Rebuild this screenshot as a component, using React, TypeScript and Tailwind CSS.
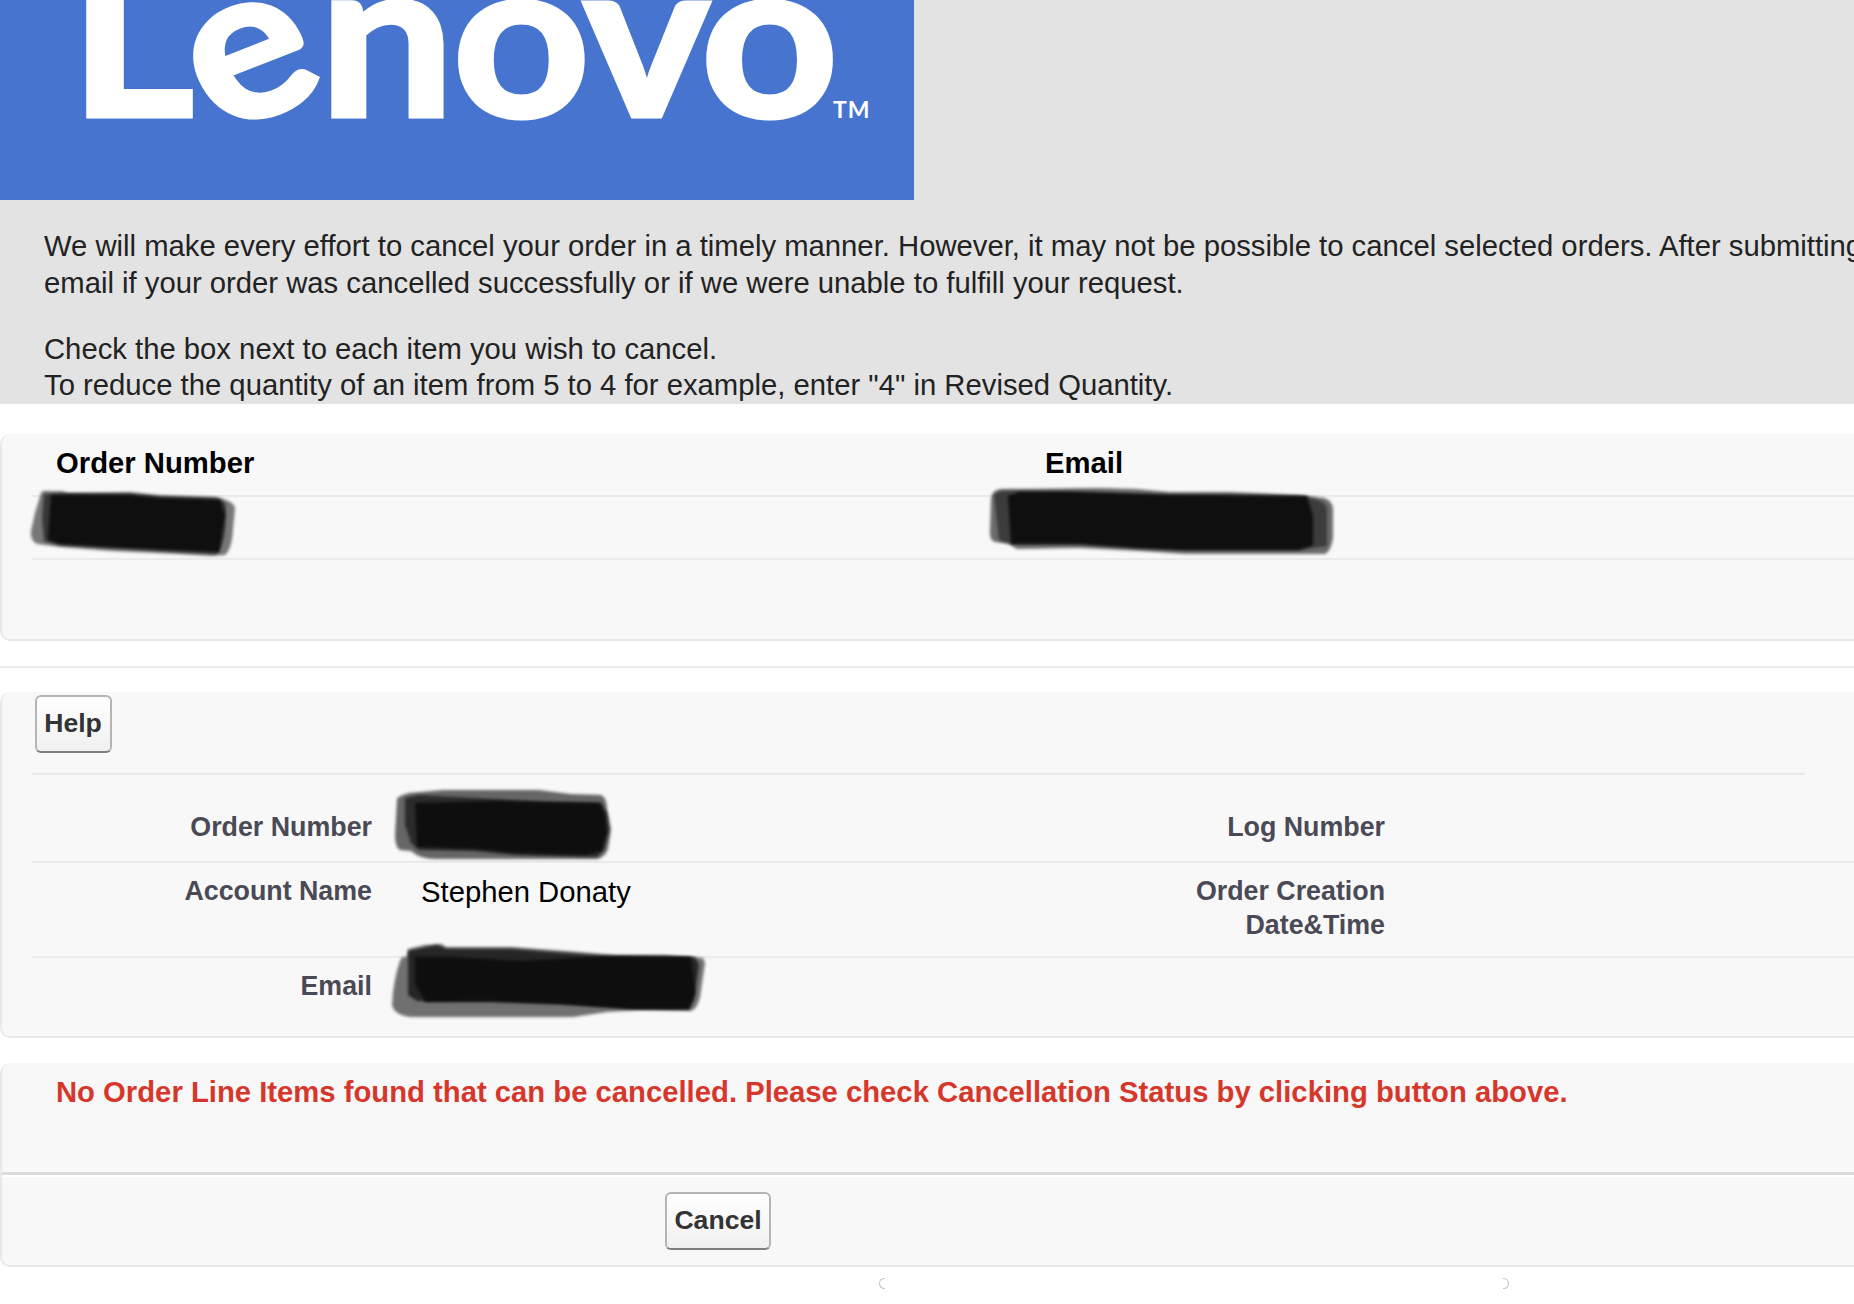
import React from 'react';

type Layer = { d: string; opacity: number };

// marker strokes that hide a private value
function Marker({ className, width, height, layers }: { className: string; width: number; height: number; layers: Layer[] }) {
  return (
    <svg className={className} width={width} height={height} viewBox={`0 0 ${width} ${height}`} overflow="visible" aria-hidden="true">
      {layers.map((l, i) => (
        <path key={i} d={l.d} fill="#0d0d0d" fillOpacity={l.opacity} className="blur-[1.6px]" />
      ))}
    </svg>
  );
}

const orderMarker: Layer[] = [
  { d: 'M11 4Q12 1 20 2L32 2 38 4 100 3 130 6 186 8Q204 12 205 19L203 40Q202 60 195 66L182 67 148 65 80 62 30 58 8 55Q0 53 1 42L5 24Z', opacity: 0.55 },
  { d: 'M14 5L38 4 100 5 130 8 186 9Q197 12 196 20L195 40Q193 60 186 65L148 63 80 59 30 56 14 52 12 28Z', opacity: 0.6 },
  { d: 'M21 6L100 6 130 9 190 11 195 26 189 63 148 61 80 58 30 55 18 51Z', opacity: 0.95 },
];

const emailMarker: Layer[] = [
  { d: 'M2 10Q3 2 12 1L110 0 148 1 180 4 240 4 310 7 335 10Q345 13 344 24L344 50Q342 63 336 66L196 66 150 63 90 60 28 61 20 56 6 54Q0 52 1 42Z', opacity: 0.6 },
  { d: 'M5 6L12 3 100 4 180 7 240 7 315 9Q340 12 338 24L338 58 310 62 196 62 150 60 90 56 22 56 10 52Z', opacity: 0.5 },
  { d: 'M19 8L30 4 80 4 180 7 318 8 324 28 324 57 310 62 196 62 150 60 90 56 22 56Z', opacity: 0.95 },
];

const detailOrderMarker: Layer[] = [
  { d: 'M2 10Q3 7 14 4L48 1 144 1 175 5 206 6Q212 9 212 20L216 40 213 60Q210 68 202 70L40 70Q25 70 16 62L5 61Q0 58 0 46Z', opacity: 0.62 },
  { d: 'M10 9L24 6 100 10 150 13 206 14 212 24 214 42 209 60 202 68 120 66 80 62 24 61 16 54 10 36Z', opacity: 0.65 },
  { d: 'M20 14L100 12 205 14 210 26 212 42 207 62 190 66 120 64 80 60 22 58Z', opacity: 0.95 },
];

const detailEmailMarker: Layer[] = [
  { d: 'M9 18Q11 13 16 14L17 6 34 2 50 1 55 4 120 4 175 8 225 12 275 12 312 15 314 20 309 54Q306 66 300 68L250 67 216 69 182 74 20 74Q3 72 1 62Q2 38 9 18Z', opacity: 0.58 },
  { d: 'M17 8L46 2 56 6 120 6 225 14 304 14 308 22 303 56 298 66 250 66 170 61 100 59 26 58 17 52Z', opacity: 0.75 },
  { d: 'M24 14L60 14 130 18 225 13 300 14 304 50 298 66 240 66 170 61 100 58 34 59 24 40Z', opacity: 0.95 },
];

function Label({ children, className }: { children?: React.ReactNode; className: string }) {
  return <div className={`${className} shrink-0 text-right text-[26.8px] leading-[34px] font-bold text-[#4a4a56]`}>{children}</div>;
}

function Button({ children, className }: { children: React.ReactNode; className: string }) {
  return (
    <button className={`${className} h-[58px] rounded-md border-2 border-[#b5b5b5] border-b-[#7f7f7f] bg-linear-to-b from-white to-[#f0f0f0] pb-[3px] text-[26.6px] leading-[34px] font-bold text-[#333]`}>
      {children}
    </button>
  );
}

export default function App() {
  return (
    <div className="h-[1304px] w-[1854px] overflow-hidden bg-white font-['Liberation_Sans',Arial,sans-serif] text-[29.25px] leading-[37px] text-black">
      <header className="h-[404px] bg-[#e3e3e3] text-[#222]">
        <div className="h-[200px] w-[914px] bg-[#4674cf]">
          <svg width="914" height="200" viewBox="0 0 914 200" fill="white">
            {/* outlined to thicken the strokes, with a tilted e */}
            <text
              x="64.5 202 295.8 419.3 540.4 649"
              y="115.5 134.5 115.5 115.5 115.5 115.5"
              rotate="0 -23 0 0 0 0"
              transform="scale(1.08 1)"
              fontFamily="Lato"
              fontWeight="700"
              fontSize="221"
              stroke="white"
              strokeWidth="5"
            >
              L<tspan fontSize="213">e</tspan>novo
            </text>
            <text x="833" y="118" fontFamily="Lato" fontWeight="700" fontSize="23" letterSpacing="1">TM</text>
          </svg>
        </div>
        <div className="pt-7 pl-11 whitespace-nowrap">
          <p>
            We will make every effort to cancel your order in a timely manner. However, it may not be possible to cancel selected orders. After submitting
            <br />
            email if your order was cancelled successfully or if we were unable to fulfill your request.
          </p>
          <p className="mt-[29px] leading-[36px]">
            Check the box next to each item you wish to cancel.
            <br />
            To reduce the quantity of an item from 5 to 4 for example, enter "4" in Revised Quantity.
          </p>
        </div>
      </header>

      <section className="mt-[30px] h-[207px] rounded-l-[10px] border-b-2 border-l-2 border-[#e9e9e9] bg-[#f8f8f8] pl-[30px]">
        <div className="flex h-[63px] border-b-2 border-[#ebebeb] pt-[11px] pl-6 font-bold">
          <div className="w-[989px]">Order Number</div>
          <div>Email</div>
        </div>
        <div className="relative h-[63px] border-b-2 border-[#ebebeb]">
          <Marker className="absolute top-[-8px] left-[-2px]" width={206} height={68} layers={orderMarker} />
          <Marker className="absolute top-[-9px] left-[957px]" width={346} height={68} layers={emailMarker} />
        </div>
      </section>

      <hr className="mt-[25px] border-t-2 border-[#ebebeb]" />

      <section className="mt-6 h-[346px] rounded-l-[10px] border-b-2 border-l-2 border-[#e9e9e9] bg-[#f8f8f8] pl-[30px]">
        <div className="h-[83px] w-[1773px] border-b-2 border-[#e9e9e9] pt-[3px] pl-[2.5px]">
          <Button className="block w-[77px]">Help</Button>
        </div>
        <div className="relative flex h-[88px] border-b-2 border-[#ebebeb] pt-[35px]">
          <Label className="w-[340px]">Order Number</Label>
          <Marker className="absolute top-[14px] left-[363px]" width={218} height={72} layers={detailOrderMarker} />
          <Label className="w-[1013px]">Log Number</Label>
        </div>
        <div className="flex h-[95px] border-b-2 border-[#ebebeb] pt-[11px]">
          <Label className="w-[340px]">Account Name</Label>
          <div className="mt-px ml-[49px] w-[600px] shrink-0 leading-[34px]">Stephen Donaty</div>
          <Label className="w-[364px]">
            Order Creation
            <br />
            Date&amp;Time
          </Label>
        </div>
        <div className="relative pt-[11px]">
          <Label className="w-[340px]">Email</Label>
          <Marker className="absolute top-[-15px] left-[359px]" width={316} height={76} layers={detailEmailMarker} />
        </div>
      </section>

      <section className="mt-[25px] h-[204px] rounded-l-[10px] border-b-2 border-l-2 border-[#e9e9e9] bg-[#f8f8f8]">
        <div className="h-[112px] border-b-[3px] border-[#dcdcdc] pt-[11px] pl-[54px] font-bold text-[#d7372b]">
          No Order Line Items found that can be cancelled. Please check Cancellation Status by clicking button above.
        </div>
        <div className="border-t-2 border-white pt-[15px] pl-[663px]">
          <Button className="block w-[106px]">Cancel</Button>
        </div>
      </section>

      <div className="mt-[11px] ml-[879px] flex w-[630px] justify-between">
        <div className="h-[11px] w-[6px] rounded-l-full border border-r-0 border-[#c4c4c4]" />
        <div className="h-[11px] w-[6px] rounded-r-full border border-l-0 border-[#c4c4c4]" />
      </div>
    </div>
  );
}
